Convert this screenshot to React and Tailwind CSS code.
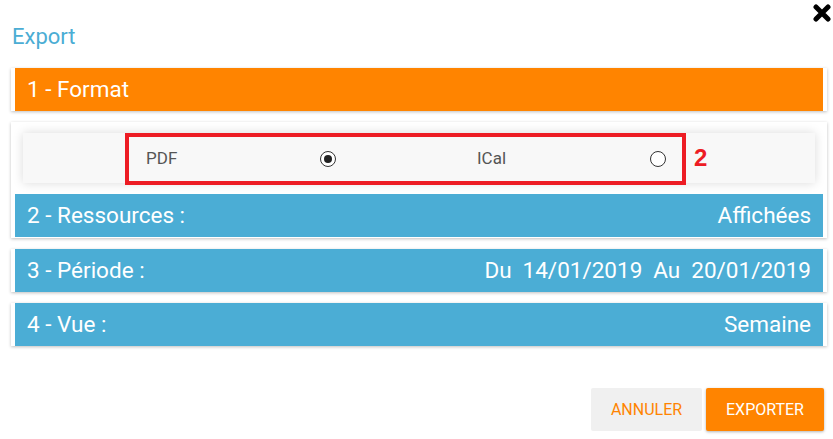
import React from "react";

function Radio({ checked }) {
  return (
    <span className="w-[16px] h-[16px] rounded-full border border-[#333] bg-white flex items-center justify-center shrink-0">
      {checked && <span className="w-[8px] h-[8px] rounded-full bg-[#222]" />}
    </span>
  );
}

function Bar({ color, left, right }) {
  return (
    <div className={`h-[43px] ${color} flex items-center justify-between px-[12px] text-white text-[22.5px]`}>
      <span>{left}</span>
      {right}
    </div>
  );
}

export default function App() {
  return (
    <div
      className="relative w-[833px] h-[439px] bg-white overflow-hidden"
      style={{ fontFamily: "Roboto, 'Liberation Sans', sans-serif" }}
    >
      <svg className="absolute top-[4px] left-[813px]" width="18" height="18" viewBox="0 0 18 18">
        <path d="M3 3 L15 15 M15 3 L3 15" stroke="#000" strokeWidth="5" strokeLinecap="round" />
      </svg>

      <div className="mt-[24px] h-[26px] leading-[26px] pl-[12px] text-[22px] text-[#4badd4]">Export</div>

      <div className="mt-[18px] ml-[11px] mr-[6px] flex flex-col gap-[11px]">
        <div className="bg-white px-[4px] shadow-[0_1px_3px_rgba(0,0,0,0.25)]">
          <Bar color="bg-[#ff8400]" left="1 - Format" />
        </div>

        <div className="bg-white px-[4px] pt-[11px] pb-[1px] shadow-[0_1px_3px_rgba(0,0,0,0.25)]">
          <div className="mx-[8px] h-[50px] bg-[#f8f8f8] shadow-[0_0_10px_rgba(0,0,0,0.15)] flex items-start">
            <div className="w-[102px] shrink-0" />
            <div className="h-[52px] w-[561px] border-[4px] border-[#ed1c24] flex items-center text-[17px] text-[#555] shrink-0">
              <div className="w-[191px] pl-[17px] shrink-0">PDF</div>
              <Radio checked />
              <div className="w-[314px] pl-[141px] shrink-0">ICal</div>
              <Radio />
            </div>
            <div
              className="ml-[8px] mt-[12px] text-[24px] leading-[26px] font-black text-[#ed1c24]"
              style={{ fontFamily: "'Liberation Sans', Arial, sans-serif" }}
            >
              2
            </div>
          </div>
          <div className="mt-[11px]">
            <Bar color="bg-[#4badd5]" left="2 - Ressources :" right={<span>Affichées</span>} />
          </div>
        </div>

        <div className="bg-white px-[4px] shadow-[0_1px_3px_rgba(0,0,0,0.25)]">
          <Bar
            color="bg-[#4badd5]"
            left="3 - Période :"
            right={
              <span className="flex gap-[11px]">
                <span>Du</span>
                <span>14/01/2019</span>
                <span>Au</span>
                <span>20/01/2019</span>
              </span>
            }
          />
        </div>

        <div className="bg-white px-[4px] shadow-[0_1px_3px_rgba(0,0,0,0.25)]">
          <Bar color="bg-[#4badd5]" left="4 - Vue :" right={<span>Semaine</span>} />
        </div>
      </div>

      <div className="mt-[42px] pr-[9px] flex justify-end gap-[4px]">
        <button className="w-[111px] h-[43px] rounded-[2px] bg-[#f0f0f0] text-[#ff8400] text-[16px]">ANNULER</button>
        <button className="w-[118px] h-[43px] rounded-[2px] bg-[#ff8400] text-white text-[16px] shadow-[0_1px_3px_rgba(0,0,0,0.3)]">
          EXPORTER
        </button>
      </div>
    </div>
  );
}
